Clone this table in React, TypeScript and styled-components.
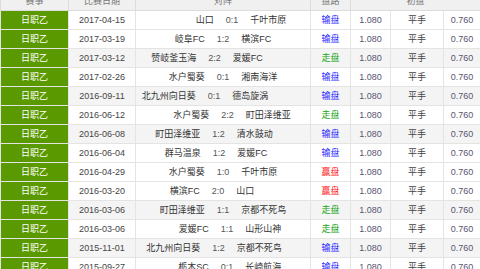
import styled, { createGlobalStyle } from 'styled-components';

const GlobalStyle = createGlobalStyle`
  html, body {
    margin: 0;
    padding: 0;
    background: #fff;
  }
  body {
    font-family: "Liberation Sans", "Noto Sans CJK SC", sans-serif;
    font-size: 9px;
    overflow: hidden;
  }
`;

const Page = styled.div`
  width: 480px;
  height: 269px;
  overflow: hidden;
`;

const Table = styled.table`
  width: 480px;
  margin-top: -10px;
  table-layout: fixed;
  border-collapse: collapse;
`;

const HeadCell = styled.th`
  height: 19px;
  padding: 0;
  background: #f0f0f0;
  border: 1px solid #dcdcdc;
  color: #777;
  font-weight: normal;
  text-align: center;
  white-space: nowrap;
`;

const Row = styled.tr<{ $shaded?: boolean }>`
  background: ${(p) => (p.$shaded ? '#f4f4f4' : '#fff')};
`;

const Cell = styled.td`
  height: 18px;
  padding: 0;
  border: 1px solid #e4e4e4;
  color: #444;
  text-align: center;
  line-height: 18px;
  white-space: nowrap;
  overflow: hidden;
`;

const LeagueCell = styled(Cell)`
  background: #5b9900;
  color: #fff;
`;

const OddsCell = styled(Cell)`
  color: #5a5470;
`;

const Matchup = styled.div`
  display: grid;
  grid-template-columns: 1fr auto 1fr;
  align-items: center;
`;

const Team = styled.span<{ $side: 'home' | 'away' }>`
  justify-self: ${(p) => (p.$side === 'home' ? 'end' : 'start')};
  color: #333;
`;

const Score = styled.span`
  margin: 0 12px;
  color: #555;
`;

type Result = 'lose' | 'draw' | 'win';

const resultColor: Record<Result, string> = {
  lose: '#2a2aff',
  draw: '#13a313',
  win: '#ff2020',
};

const resultText: Record<Result, string> = {
  lose: '输盘',
  draw: '走盘',
  win: '赢盘',
};

const ResultTag = styled.span<{ $result: Result }>`
  color: ${(p) => resultColor[p.$result]};
`;

type Match = {
  date: string;
  home: string;
  score: string;
  away: string;
  result: Result;
  shaded?: boolean;
};

const matches: Match[] = [
  { date: '2017-04-15', home: '山口', score: '0:1', away: '千叶市原', result: 'lose' },
  { date: '2017-03-19', home: '岐阜FC', score: '1:2', away: '横滨FC', result: 'lose' },
  { date: '2017-03-12', home: '赞岐釜玉海', score: '2:2', away: '爱媛FC', result: 'draw', shaded: true },
  { date: '2017-02-26', home: '水户蜀葵', score: '0:1', away: '湘南海洋', result: 'lose' },
  { date: '2016-09-11', home: '北九州向日葵', score: '0:1', away: '德岛旋涡', result: 'lose', shaded: true },
  { date: '2016-06-12', home: '水户蜀葵', score: '2:2', away: '町田泽维亚', result: 'draw' },
  { date: '2016-06-08', home: '町田泽维亚', score: '1:2', away: '清水鼓动', result: 'lose', shaded: true },
  { date: '2016-06-04', home: '群马温泉', score: '1:2', away: '爱媛FC', result: 'lose' },
  { date: '2016-04-29', home: '水户蜀葵', score: '1:0', away: '千叶市原', result: 'win' },
  { date: '2016-03-20', home: '横滨FC', score: '2:0', away: '山口', result: 'win' },
  { date: '2016-03-06', home: '町田泽维亚', score: '1:1', away: '京都不死鸟', result: 'draw', shaded: true },
  { date: '2016-03-06', home: '爱媛FC', score: '1:1', away: '山形山神', result: 'draw' },
  { date: '2015-11-01', home: '北九州向日葵', score: '1:2', away: '京都不死鸟', result: 'lose', shaded: true },
  { date: '2015-09-27', home: '栃木SC', score: '0:1', away: '长崎航海', result: 'lose' },
];

// rough width of a name at 9px, used to nudge the score like the original page does
const nameWidth = (s: string) =>
  [...s].reduce((w, ch) => w + (ch.charCodeAt(0) > 0x2e80 ? 9 : /[A-Z]/.test(ch) ? 5 : 4.5), 0);

const columns = [68, 67, 175, 40, 40, 53, 37];

export default function App() {
  return (
    <Page>
      <GlobalStyle />
      <Table>
        <colgroup>
          {columns.map((w, i) => (
            <col key={i} style={{ width: w }} />
          ))}
        </colgroup>
        <thead>
          <tr>
            <HeadCell>赛事</HeadCell>
            <HeadCell>比赛日期</HeadCell>
            <HeadCell>对阵</HeadCell>
            <HeadCell>盘路</HeadCell>
            <HeadCell colSpan={3}>初盘</HeadCell>
          </tr>
        </thead>
        <tbody>
          {matches.map((m, i) => {
            const shift = (nameWidth(m.away) - nameWidth(m.home)) / 2;
            return (
              <Row key={i} $shaded={m.shaded}>
                <LeagueCell>日职乙</LeagueCell>
                <Cell>{m.date}</Cell>
                <Cell>
                  <Matchup style={{ transform: `translateX(${shift}px)` }}>
                    <Team $side="home">{m.home}</Team>
                    <Score>{m.score}</Score>
                    <Team $side="away">{m.away}</Team>
                  </Matchup>
                </Cell>
                <Cell>
                  <ResultTag $result={m.result}>{resultText[m.result]}</ResultTag>
                </Cell>
                <OddsCell>1.080</OddsCell>
                <Cell>平手</Cell>
                <OddsCell>0.760</OddsCell>
              </Row>
            );
          })}
        </tbody>
      </Table>
    </Page>
  );
}
